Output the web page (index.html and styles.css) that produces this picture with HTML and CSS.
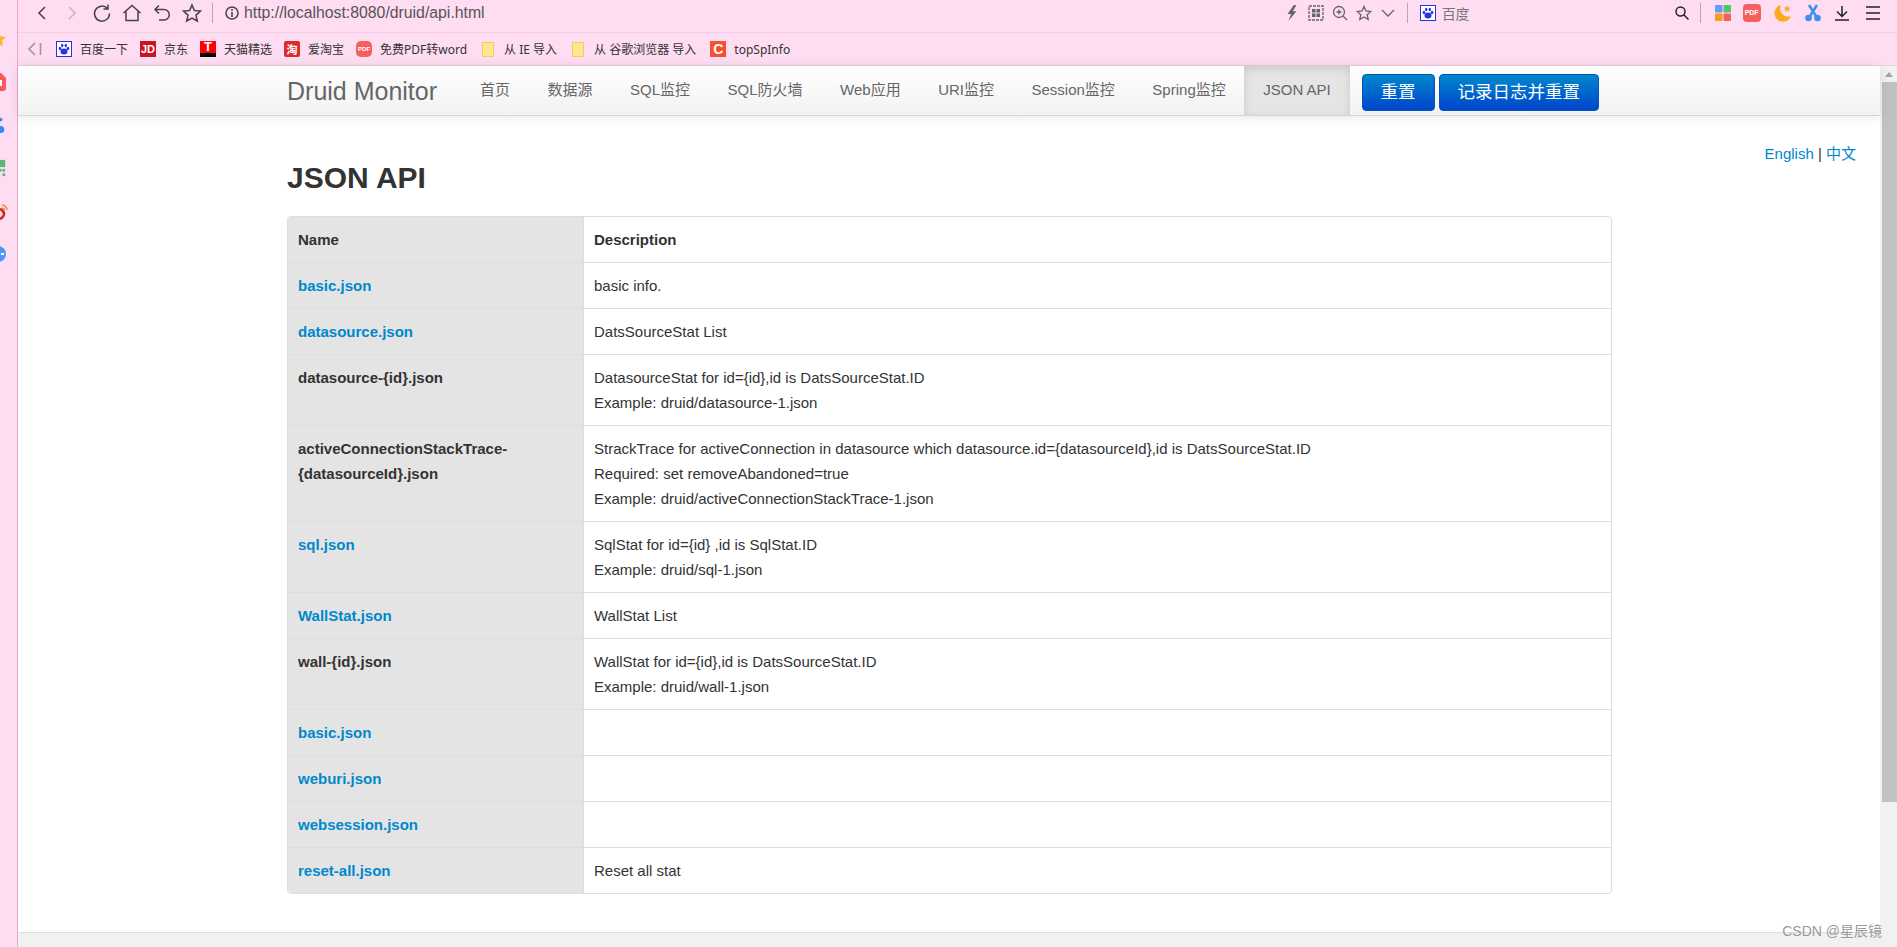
FILE: index.html
```html
<!DOCTYPE html>
<html lang="zh-CN">
<head>
<meta charset="UTF-8">
<title>Druid Monitor - JSON API</title>
<link rel="stylesheet" href="styles.css">
</head>
<body>
<div class="window">

    <div class="side">
        <svg class="side-icon" viewBox="0 0 16 16"><polygon points="8,0 10.4,5.2 16,5.9 11.9,9.8 13,15.5 8,12.7 3,15.5 4.100,9.800 0,5.900 5.600,5.200" fill="#f9b92c"/></svg>
        <svg class="side-icon" viewBox="0 0 16 18"><path d="M3 0h8l5 5v10a3 3 0 0 1-3 3H3a3 3 0 0 1-3-3V3a3 3 0 0 1 3-3z" fill="#f45a62"/><rect x="9" y="7" width="3" height="6" fill="#fff"/></svg>
        <svg class="side-icon" viewBox="0 0 16 20"><circle cx="11" cy="4" r="2" fill="#2f8cf5"/><circle cx="11" cy="15" r="4" fill="#2f8cf5"/></svg>
        <svg class="side-icon" viewBox="0 0 16 20"><rect x="0" y="1" width="16" height="8" fill="#58b878"/><rect x="9" y="11" width="3" height="3" fill="#58b878"/><rect x="13" y="11" width="3" height="3" fill="#58b878"/><rect x="13" y="16" width="3" height="3" fill="#58b878"/></svg>
        <svg class="side-icon side-weibo" viewBox="0 0 16 18"><ellipse cx="6" cy="12" rx="6" ry="5" fill="none" stroke="#d0211c" stroke-width="2.500"/><path d="M10 3a5 5 0 0 1 5 5M10 6a2.500 2.500 0 0 1 2.500 2.500" fill="none" stroke="#f08a24" stroke-width="1.500"/></svg>
        <svg class="side-icon" viewBox="0 0 16 16"><circle cx="8" cy="8" r="8" fill="#4a97f5"/><rect x="11" y="7" width="3" height="2" fill="#fff"/></svg>
    </div>

    <div class="main">
        <div class="toolbar">
            <svg class="tool tool-back" viewBox="0 0 18 20"><polyline points="12,4 6,10 12,16" class="line"/></svg>
            <svg class="tool tool-fwd" viewBox="0 0 18 20"><polyline points="6,4 12,10 6,16" class="line faint"/></svg>
            <svg class="tool" viewBox="0 0 20 20"><path d="M15.500 5.500A7.500 7.500 0 1 0 17.500 10.500M16 1.500v4.500h-4.500" class="line"/></svg>
            <svg class="tool" viewBox="0 0 20 20"><path d="M1.500 10L10 2.500l8.500 7.500M4 8.500v9h12v-9" class="line"/></svg>
            <svg class="tool" viewBox="0 0 20 20"><path d="M7 2.500L3 6.500l4 4M3 6.500h9a4.500 4.500 0 0 1 0 10.500H7" class="line"/></svg>
            <svg class="tool" viewBox="0 0 20 20"><polygon points="10,2 12.400,7.500 18.500,8.100 14,12.100 15.300,18 10,15 4.700,18 6,12.100 1.500,8.100 7.600,7.500" class="line"/></svg>
            <span class="tool-sep"></span>
            <svg class="tool-info" viewBox="0 0 14 14"><circle cx="7" cy="7" r="6" class="line"/><rect x="6.200" y="3" width="1.600" height="1.800" fill="#444"/><rect x="6.200" y="6" width="1.600" height="5" fill="#444"/></svg>
            <span class="url">http://localhost:8080/druid/api.html</span>

            <div class="tool-right">
                <svg class="mini" viewBox="0 0 14 18"><polygon points="9,0 2,10 6,10 3,18 12,7 8,7 12,0" fill="#666"/></svg>
                <svg class="mini" viewBox="0 0 16 16"><rect x="1" y="1" width="14" height="14" class="line thin" stroke-dasharray="3 1"/><rect x="4" y="4" width="3.500" height="3.500" fill="#666"/><rect x="8.500" y="4" width="3.500" height="3.500" fill="#666"/><rect x="4" y="8.500" width="3.500" height="3.500" fill="#666"/><rect x="8.500" y="8.500" width="3.500" height="3.500" fill="#666"/></svg>
                <svg class="mini" viewBox="0 0 16 16"><circle cx="7" cy="7" r="5.500" class="line thin"/><path d="M11 11l4 4M4.500 7h5M7 4.500v5" class="line thin"/></svg>
                <svg class="mini" viewBox="0 0 16 16"><polygon points="8,1.500 10,6 14.800,6.500 11.200,9.700 12.200,14.500 8,12 3.800,14.500 4.800,9.700 1.200,6.500 6,6" class="line thin"/></svg>
                <svg class="mini" viewBox="0 0 16 16"><polyline points="2,5 8,11 14,5" class="line thin"/></svg>
                <span class="tool-sep sep-search"></span>
                <span class="fav fav-baidu"><svg viewBox="0 0 14 14"><ellipse cx="7" cy="9.500" rx="3.500" ry="3" fill="#2932e1"/><ellipse cx="3" cy="6.500" rx="1.300" ry="1.700" fill="#2932e1"/><ellipse cx="11" cy="6.500" rx="1.300" ry="1.700" fill="#2932e1"/><ellipse cx="5.200" cy="3.500" rx="1.200" ry="1.700" fill="#2932e1"/><ellipse cx="8.800" cy="3.500" rx="1.200" ry="1.700" fill="#2932e1"/></svg></span>
                <span class="search-name">百度</span>
                <svg class="mini mini-search" viewBox="0 0 16 16"><circle cx="6.500" cy="6.500" r="4.500" class="line dark"/><path d="M10 10l4.500 4.500" class="line dark"/></svg>
                <span class="tool-sep sep-ext"></span>
                <svg class="ext ext-grid" viewBox="0 0 16 16"><rect x="0" y="0" width="7.500" height="7.500" rx="1" fill="#6a9bf4"/><rect x="8.500" y="0" width="7.500" height="7.500" rx="1" fill="#4cc763"/><rect x="0" y="8.500" width="7.500" height="7.500" rx="1" fill="#f59b1d"/><rect x="8.500" y="8.500" width="7.500" height="7.500" rx="1" fill="#f4605f"/></svg>
                <span class="ext ext-pdf">PDF</span>
                <svg class="ext ext-moon" viewBox="0 0 18 18"><path d="M7 1a8.500 8.500 0 1 0 10 11A8 8 0 0 1 7 1z" fill="#fbab1d"/><polygon points="13,1 14,3.500 16.500,3.700 14.600,5.300 15.300,8 13,6.500 10.700,8 11.400,5.300 9.500,3.700 12,3.500" fill="#fbab1d"/></svg>
                <svg class="ext ext-cut" viewBox="0 0 16 18"><path d="M4 1l7 11M12 1L5 12" fill="none" stroke="#3d8ff2" stroke-width="2.500"/><circle cx="3.500" cy="14" r="3.300" fill="#3d8ff2"/><circle cx="12.500" cy="14" r="3.300" fill="#3d8ff2"/></svg>
                <svg class="ext ext-down" viewBox="0 0 16 16"><path d="M8 1v10M3 6.500L8 11.500l5-5M1 15h14" class="line dark"/></svg>
                <svg class="ext" viewBox="0 0 16 16"><path d="M1 2h14M1 8h14M1 14h14" class="line dark"/></svg>
            </div>
        </div>

        <div class="bookmarks">
            <svg class="collapse" viewBox="0 0 14 14"><polyline points="7,1 1,7 7,13" class="line soft"/><path d="M12.500 1v12" class="line soft"/></svg>
            <a class="mark"><span class="fav fav-baidu"><svg viewBox="0 0 14 14"><ellipse cx="7" cy="9.500" rx="3.500" ry="3" fill="#2932e1"/><ellipse cx="3" cy="6.500" rx="1.300" ry="1.700" fill="#2932e1"/><ellipse cx="11" cy="6.500" rx="1.300" ry="1.700" fill="#2932e1"/><ellipse cx="5.200" cy="3.500" rx="1.200" ry="1.700" fill="#2932e1"/><ellipse cx="8.800" cy="3.500" rx="1.200" ry="1.700" fill="#2932e1"/></svg></span>百度一下</a>
            <a class="mark"><span class="fav fav-jd">JD</span>京东</a>
            <a class="mark"><span class="fav fav-tmall">T</span>天猫精选</a>
            <a class="mark"><span class="fav fav-taobao">淘</span>爱淘宝</a>
            <a class="mark"><span class="fav fav-pdf">PDF</span>免费PDF转word</a>
            <a class="mark mark-folder"><span class="folder"></span>从 IE 导入</a>
            <a class="mark mark-folder"><span class="folder"></span>从 谷歌浏览器 导入</a>
            <a class="mark mark-last"><span class="fav fav-c">C</span>topSpInfo</a>
        </div>

        <div class="viewport">
            <div class="page">
                <div class="navbar">
                    <div class="wrap nav-inner">
                        <a class="brand">Druid Monitor</a>
                        <ul class="nav">
                            <li><a>首页</a></li>
                            <li><a>数据源</a></li>
                            <li><a>SQL监控</a></li>
                            <li><a>SQL防火墙</a></li>
                            <li><a>Web应用</a></li>
                            <li><a>URI监控</a></li>
                            <li><a>Session监控</a></li>
                            <li><a>Spring监控</a></li>
                            <li class="active"><a>JSON API</a></li>
                        </ul>
                        <a class="btn btn-first">重置</a>
                        <a class="btn">记录日志并重置</a>
                    </div>
                </div>

                <div class="content">
                    <div class="lang"><a>English</a> | <a>中文</a></div>
                    <div class="wrap">
                        <h1>JSON API</h1>
                        <table class="api">
                            <tr><th>Name</th><td><b>Description</b></td></tr>
                            <tr><th><a>basic.json</a></th><td>basic info.</td></tr>
                            <tr><th><a>datasource.json</a></th><td>DatsSourceStat List</td></tr>
                            <tr><th>datasource-{id}.json</th><td>DatasourceStat for id={id},id is DatsSourceStat.ID<br>Example: druid/datasource-1.json</td></tr>
                            <tr><th>activeConnectionStackTrace-<br>{datasourceId}.json</th><td>StrackTrace for activeConnection in datasource which datasource.id={datasourceId},id is DatsSourceStat.ID<br>Required: set removeAbandoned=true<br>Example: druid/activeConnectionStackTrace-1.json</td></tr>
                            <tr><th><a>sql.json</a></th><td>SqlStat for id={id} ,id is SqlStat.ID<br>Example: druid/sql-1.json</td></tr>
                            <tr><th><a>WallStat.json</a></th><td>WallStat List</td></tr>
                            <tr><th>wall-{id}.json</th><td>WallStat for id={id},id is DatsSourceStat.ID<br>Example: druid/wall-1.json</td></tr>
                            <tr><th><a>basic.json</a></th><td></td></tr>
                            <tr><th><a>weburi.json</a></th><td></td></tr>
                            <tr><th><a>websession.json</a></th><td></td></tr>
                            <tr><th><a>reset-all.json</a></th><td>Reset all stat</td></tr>
                        </table>
                    </div>
                </div>

                <div class="footer"></div>
            </div>

            <div class="scrollbar">
                <span class="arrow"></span>
                <span class="thumb"></span>
            </div>
        </div>
    </div>

    <div class="watermark">CSDN @星辰镜</div>
</div>
</body>
</html>
```

FILE: styles.css
```css
* {
    box-sizing: border-box;
    margin: 0;
    padding: 0;
}

html, body {
    height: 100%;
    overflow: hidden;
}

body {
    font-family: "Liberation Sans", "Noto Sans CJK SC", sans-serif;
    font-size: 15px;
    color: #333;
    background: #fff;
}

.window {
    position: relative;
    display: flex;
    height: 947px;
    overflow: hidden;
}

/* svg line helpers */
.line {
    fill: none;
    stroke: #444;
    stroke-width: 1.5;
}

.line.thin {
    stroke: #666;
    stroke-width: 1.3;
}

.line.dark {
    stroke: #222;
}

.line.faint {
    stroke: #c4b4c0;
}

.line.soft {
    stroke: #999;
    stroke-width: 1.6;
}

/* left sidebar, icons are cut off by the edge */
.side {
    flex: 0 0 18px;
    display: flex;
    flex-direction: column;
    gap: 25px;
    padding-top: 30px;
    background: #fedcf2;
    border-right: 1px solid #eda6d2;
    overflow: hidden;
}

.side-icon {
    flex: none;
    width: 16px;
    height: 18px;
    margin-left: -10px;
}

.side-weibo {
    margin-left: -8px;
}

.main {
    flex: 1;
    min-width: 0;
    display: flex;
    flex-direction: column;
}

/* browser toolbar */
.toolbar {
    flex: 0 0 33px;
    display: flex;
    align-items: center;
    padding: 0 0 6px 14px;
    white-space: nowrap;
    background: #fedcf2;
    border-bottom: 1px solid #f0d0e5;
    overflow: hidden;
}

.tool {
    flex: none;
    width: 20px;
    height: 20px;
    margin-right: 10px;
}

.tool-sep {
    flex: none;
    width: 1px;
    height: 20px;
    margin: 0 12px 0 0;
    background: #b8a8b4;
}

.tool-info {
    flex: none;
    width: 14px;
    height: 14px;
    margin-right: 5px;
}

.url {
    flex: none;
    font-size: 15.8px;
    color: #555;
}

.tool-right {
    flex: none;
    display: flex;
    align-items: center;
    margin-left: 799px;
}

.mini {
    flex: none;
    width: 16px;
    height: 16px;
    margin-right: 8px;
}

.sep-search {
    margin-left: 3px;
}

.search-name {
    flex: none;
    margin-left: 6px;
    font-size: 14px;
    color: #777;
}

.mini-search {
    margin-left: 204px;
    margin-right: 10px;
}

.sep-ext {
    margin-right: 14px;
}

.ext {
    flex: none;
    width: 16px;
    height: 16px;
    margin-right: 13px;
}

.ext-grid {
    margin-right: 12px;
}

.ext-pdf {
    width: 18px;
    height: 18px;
    font-size: 7px;
    font-weight: bold;
    line-height: 18px;
    text-align: center;
    color: #fff;
    background: #f4605f;
    border-radius: 4px;
}

.ext-moon {
    width: 18px;
    height: 18px;
}

.ext-cut {
    height: 18px;
}

.ext-down {
    margin-right: 15px;
}

/* bookmarks bar */
.bookmarks {
    flex: 0 0 33px;
    display: flex;
    align-items: center;
    padding-left: 10px;
    background: #fedcf2;
    border-bottom: 1px solid #ecd0e2;
    font-family: "Noto Sans", "Noto Sans CJK SC", sans-serif;
    font-size: 12px;
    color: #333;
}

.collapse {
    flex: none;
    width: 14px;
    height: 14px;
    margin-right: 14px;
}

.mark {
    display: flex;
    align-items: center;
    gap: 8px;
    margin-right: 12px;
    white-space: nowrap;
}

.mark-folder {
    gap: 10px;
    margin-left: 3px;
}

.mark-last {
    margin-left: 2px;
}

.fav {
    flex: none;
    display: flex;
    align-items: center;
    justify-content: center;
    width: 16px;
    height: 16px;
    font-family: "Liberation Sans", "Noto Sans CJK SC", sans-serif;
    font-weight: bold;
    color: #fff;
}

.fav svg {
    width: 14px;
    height: 14px;
}

.fav-baidu {
    background: #fff;
    border: 1px solid #2932e1;
}

.fav-jd {
    font-size: 11px;
    background: #c9151e;
}

.fav-tmall {
    font-size: 13px;
    line-height: 12px;
    align-items: flex-start;
    background: #f00;
    border-bottom: 4px solid #000;
}

.fav-taobao {
    font-size: 11px;
    background: #dc2a2e;
    border-radius: 2px;
}

.fav-pdf {
    font-size: 6px;
    background: #f4605f;
    border-radius: 5px;
}

.fav-c {
    font-size: 14px;
    background: #f4512c;
}

.folder {
    flex: none;
    width: 12px;
    height: 15px;
    background: #fee58f;
    border: 1px solid #f3cd5c;
}

/* page area */
.viewport {
    flex: 1;
    min-height: 0;
    display: flex;
}

.page {
    flex: 1;
    min-width: 0;
    display: flex;
    flex-direction: column;
}

.wrap {
    width: 1325px;
    margin-left: 269px;
}

.navbar {
    flex: 0 0 50px;
    position: relative;
    background: linear-gradient(#fff, #f2f2f2);
    border-bottom: 1px solid #d4d4d4;
    box-shadow: 0 1px 10px rgba(0, 0, 0, 0.1);
}

.nav-inner {
    display: flex;
    align-items: center;
    height: 49px;
    white-space: nowrap;
}

.brand {
    flex: none;
    width: 174.25px;
    padding-top: 2px;
    font-size: 25px;
    color: #666;
}

.nav {
    flex: none;
    display: flex;
    height: 49px;
    list-style: none;
}

.nav a {
    display: block;
    padding: 0 18.75px;
    line-height: 48px;
    color: #666;
}

.nav .active a {
    height: 49px;
    background: #e5e5e5;
    box-shadow: inset 0 3px 8px rgba(0, 0, 0, 0.125);
}

.btn {
    flex: none;
    height: 37px;
    margin-top: 4px;
    margin-left: 4px;
    padding: 0 18px;
    font-size: 17.5px;
    line-height: 35px;
    color: #fff;
    background: linear-gradient(#0088cc, #0044cc);
    border: 1px solid #0055bb;
    border-radius: 4px;
}

.btn-first {
    margin-left: 12px;
}

.content {
    flex: 1;
}

.lang {
    float: right;
    margin: 28px 24px 0 0;
    line-height: 20px;
}

.lang a {
    color: #0088cc;
}

h1 {
    padding-top: 42px;
    margin-bottom: 18px;
    font-size: 30px;
    line-height: 40px;
    font-weight: bold;
}

/* api table */
.api {
    width: 1325px;
    table-layout: fixed;
    border-collapse: separate;
    border-spacing: 0;
    border: 1px solid #ddd;
    border-radius: 4px;
    line-height: 25px;
}

.api th,
.api td {
    padding: 10px;
    vertical-align: top;
    text-align: left;
    border-top: 1px solid #ddd;
}

.api tr:first-child th,
.api tr:first-child td {
    border-top: 0;
}

.api th {
    width: 295px;
    font-weight: bold;
    background: #e4e4e4;
}

.api tr:first-child th {
    border-top-left-radius: 4px;
}

.api tr:last-child th {
    border-bottom-left-radius: 4px;
}

.api td {
    border-left: 1px solid #ddd;
}

.api a {
    color: #0088cc;
}

.footer {
    flex: 0 0 15px;
    background: #f1f1f1;
    border-top: 1px solid #ddd;
}

.scrollbar {
    flex: 0 0 17px;
    display: flex;
    flex-direction: column;
    align-items: flex-end;
    background: #f1f1f1;
}

.arrow {
    width: 0;
    height: 0;
    margin: 6px 4px 5px 0;
    border: 4px solid transparent;
    border-top: 0;
    border-bottom: 5px solid #a3a3a3;
}

.thumb {
    width: 15px;
    height: 720px;
    background: #c1c1c1;
}

.watermark {
    position: absolute;
    right: 15px;
    bottom: 8px;
    font-size: 14px;
    line-height: 16px;
    color: #999;
}
```
